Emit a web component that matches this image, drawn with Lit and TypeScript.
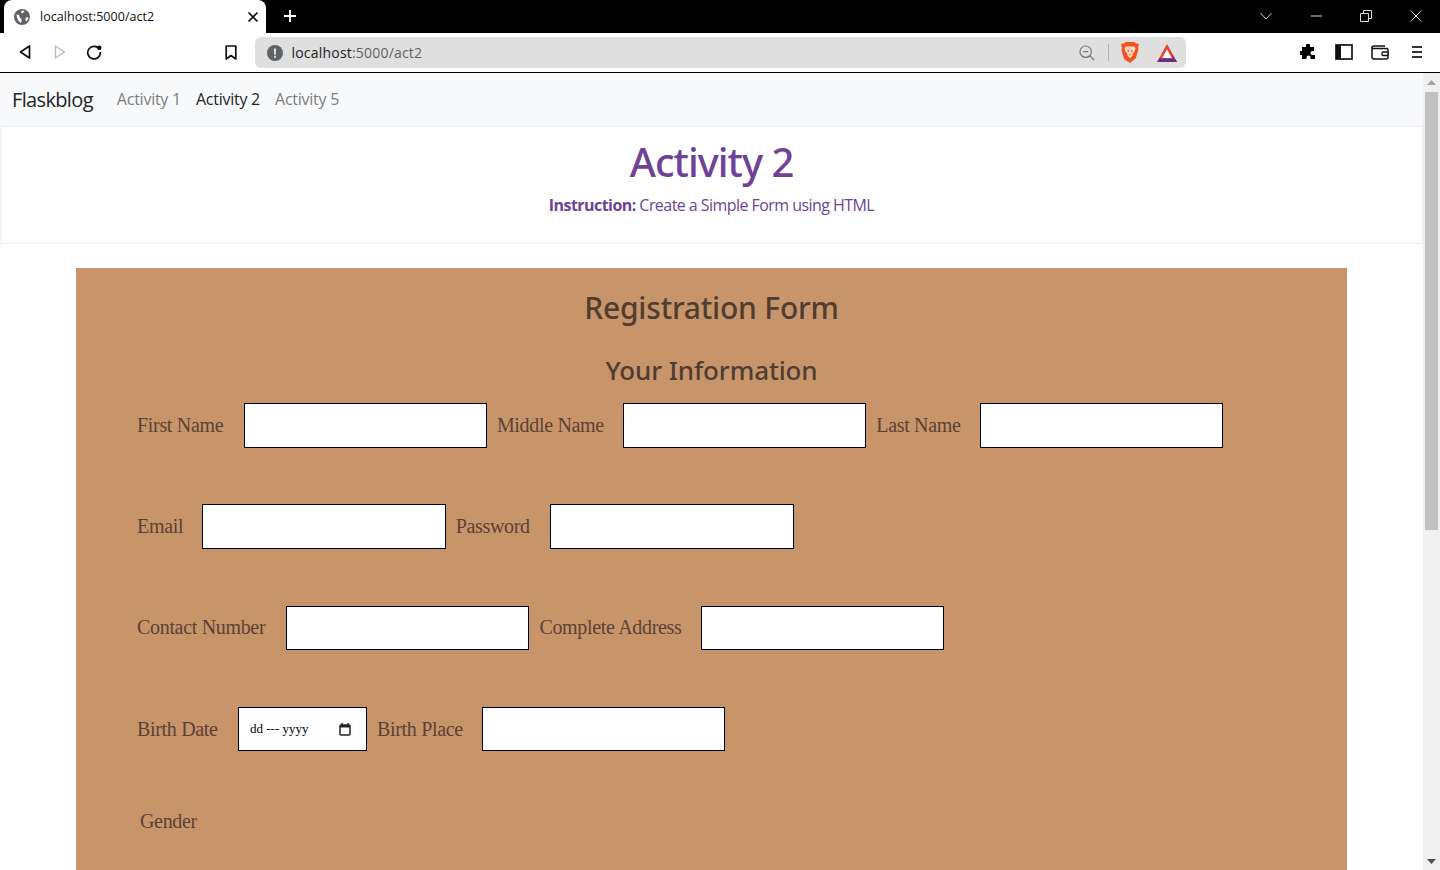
import {html, css, LitElement} from 'lit';
import {customElement} from 'lit/decorators.js';

const rows = [
  [
    {label: 'First Name', w: 106.5},
    {label: 'Middle Name', w: 126},
    {label: 'Last Name', w: 103.3},
  ],
  [
    {label: 'Email', w: 65.3},
    {label: 'Password', w: 94.5},
  ],
  [
    {label: 'Contact Number', w: 149},
    {label: 'Complete Address', w: 161.5},
  ],
];

@customElement('app-root')
export class AppRoot extends LitElement {
  static styles = css`
    :host {
      display: block;
      width: 1440px;
      height: 870px;
      overflow: hidden;
      background: #fff;
      font-family: "Open Sans", "Noto Sans", sans-serif;
    }

    /* browser chrome */
    .tabstrip {
      height: 33px;
      background: #000;
      display: flex;
      align-items: stretch;
      padding-left: 4px;
    }
    .tab {
      width: 262px;
      box-sizing: border-box;
      background: #fff;
      border-radius: 8px 8px 0 0;
      display: flex;
      align-items: center;
      padding: 0 5px 0 10px;
      font-size: 12.5px;
      letter-spacing: 0.05px;
      color: #111;
    }
    .tab-title { margin-left: 10px; flex: 1; }
    .new-tab {
      width: 48px;
      padding-bottom: 1px;
      display: flex;
      align-items: center;
      justify-content: center;
    }
    .window-btns { margin: 0 -1px 0 auto; display: flex; align-items: center; }
    .window-btns div {
      width: 50px;
      height: 31px;
      margin-bottom: 2px;
      display: flex;
      align-items: center;
      justify-content: center;
    }
    .toolbar {
      height: 39px;
      border-bottom: 1px solid #000;
      background: #fff;
      display: flex;
      align-items: center;
      padding-left: 8px;
    }
    .tool {
      width: 34.5px;
      height: 34px;
      margin-bottom: 1px;
      display: flex;
      align-items: center;
      justify-content: center;
      flex: none;
    }
    .tool.bookmark { margin-left: 102.5px; }
    .urlbar {
      width: 931px;
      height: 31px;
      margin-left: 6px;
      background: #dfdfdf;
      border-radius: 6px;
      display: flex;
      align-items: center;
      padding: 0 9px 0 12px;
      box-sizing: border-box;
      font-size: 14px;
      letter-spacing: 0.2px;
      color: #202124;
    }
    .url-text { margin-left: 9px; flex: 1; }
    .url-text span { color: #5f6368; }
    .url-sep { width: 1px; height: 17px; background: #b4b4b4; margin: 0 12px 0 13px; }
    .bat { margin-left: 18px; }
    .right-tools { margin-left: 104px; display: flex; }
    .right-tools .tool { width: 36.3px; }

    /* page + scrollbar */
    .viewport { display: flex; height: 797px; overflow: hidden; }
    .page { width: 1423px; flex: none; }
    .scrollbar {
      width: 17px;
      background: #f0f0f0;
      position: relative;
      flex: none;
    }
    .sb-thumb {
      position: absolute;
      left: 2px;
      top: 19px;
      width: 13px;
      height: 438px;
      background: #c1c1c1;
    }
    .sb-up, .sb-down { position: absolute; left: 4px; }
    .sb-up { top: 7px; }
    .sb-down { bottom: 5px; }

    .navbar {
      height: 53px;
      box-sizing: border-box;
      padding: 0 0 1px 12px;
      background: #f8f9fa;
      display: flex;
      align-items: center;
      font-size: 16px;
      letter-spacing: -0.25px;
    }
    .brand { font-size: 20px; color: #212529; margin-right: 24px; letter-spacing: -0.65px; }
    .nav-link { color: #7c7d7f; margin-right: 15px; }
    .nav-link.active { color: #212529; }

    .jumbo {
      height: 118px;
      box-sizing: border-box;
      border: 1px solid #eee;
      text-align: center;
      color: #6f4296;
      padding-top: 11px;
    }
    .jumbo h1 {
      margin: 0;
      font-family: "Noto Sans", sans-serif;
      font-size: 40px;
      line-height: 48px;
      font-weight: 500;
      letter-spacing: -1px;
    }
    .jumbo p { margin: 7px 0 0; font-size: 16px; line-height: 24px; letter-spacing: -0.55px; }
    .jumbo b { font-weight: 700; }

    .form {
      margin: 24px 76px 0;
      height: 700px;
      background: #c8956b;
      color: #5a4235;
      padding: 0 61px;
    }
    .form h2 {
      margin: 0;
      padding-top: 20px;
      font-family: "Noto Sans", sans-serif;
      font-size: 30px;
      line-height: 39px;
      font-weight: 500;
      text-align: center;
      letter-spacing: -0.2px;
      color: #4f3d31;
    }
    .form h3 {
      margin: 27px 0 0;
      font-family: "Noto Sans", sans-serif;
      font-size: 26px;
      line-height: 32px;
      font-weight: 500;
      text-align: center;
      letter-spacing: -0.13px;
      color: #4f3d31;
    }
    .rows { margin-top: 17px; }
    .row {
      display: flex;
      align-items: center;
      height: 44.55px;
      margin-bottom: 56.75px;
    }
    .label {
      font-family: "Liberation Serif", serif;
      font-size: 20px;
      letter-spacing: -0.32px;
      white-space: nowrap;
      flex: none;
    }
    input, .date {
      box-sizing: border-box;
      height: 44.55px;
      width: 243.4px;
      border: 1px solid #000;
      background: #fff;
      margin: 0 10px 0 0;
      padding: 0 10px;
      border-radius: 0;
      flex: none;
    }
    .date {
      width: 129px;
      display: flex;
      align-items: center;
      justify-content: space-between;
      font-family: "Liberation Serif", serif;
      font-size: 13px;
      padding: 0 15px 0 11px;
      color: #000;
    }
    .gender { margin-left: 3px; padding-top: 2px; }
  `;

  render() {
    return html`
      <div class="tabstrip">
        <div class="tab">
          <svg width="16" height="16" viewBox="0 0 16 16"><circle cx="8" cy="8" r="8" fill="#5f6368"/><path d="M2.500 5.500l2.500.5 1 3 1.500 1v2.500l-1 1.500-2.500-3-1-2.500zM8 1.500l2.500.5-1 1.500-1.500 1-1-1.500zM11.500 9l2.500-1 .5 1.500-2 3-1-1z" fill="#fff"/></svg>
          <span class="tab-title">localhost:5000/act2</span>
          <svg width="16" height="16" viewBox="0 0 16 16"><path d="M3.5 3.5l9 9M12.5 3.5l-9 9" stroke="#111" stroke-width="1.7"/></svg>
        </div>
        <div class="new-tab">
          <svg width="14" height="14" viewBox="0 0 14 14"><path d="M7 1v12M1 7h12" stroke="#fff" stroke-width="2"/></svg>
        </div>
        <div class="window-btns">
          <div><svg width="12" height="8" viewBox="0 0 12 8"><path d="M.5 1l5.500 6 5.500-6" fill="none" stroke="#ccc"/></svg></div>
          <div><svg width="11" height="2" viewBox="0 0 11 2"><path d="M0 1h11" stroke="#ddd"/></svg></div>
          <div><svg width="12" height="12" viewBox="0 0 12 12"><path d="M.5 3.500h8v8h-8zM3.500 3.500v-3h8v8h-3" fill="none" stroke="#ddd"/></svg></div>
          <div><svg width="12" height="12" viewBox="0 0 12 12"><path d="M.5.5l11 11M11.500.5l-11 11" stroke="#ddd"/></svg></div>
        </div>
      </div>
      <div class="toolbar">
        <div class="tool"><svg width="12" height="14" viewBox="0 0 12 14"><path d="M10.500 1v12L1.500 7z" fill="none" stroke="#111" stroke-width="1.700" stroke-linejoin="round"/></svg></div>
        <div class="tool"><svg width="12" height="14" viewBox="0 0 12 14"><path d="M1.500 1v12l9-6z" fill="none" stroke="#bbb" stroke-width="1.400" stroke-linejoin="round"/></svg></div>
        <div class="tool"><svg width="16" height="16" viewBox="0 0 16 16"><path d="M13.500 5.500A6.300 6.300 0 1 0 14.300 8" fill="none" stroke="#111" stroke-width="1.700"/><circle cx="13.300" cy="3.800" r="2.200" fill="#111"/></svg></div>
        <div class="tool bookmark"><svg width="12" height="15" viewBox="0 0 12 15"><path d="M1.200 1h9.600v13L6 10.500 1.200 14z" fill="none" stroke="#111" stroke-width="1.700" stroke-linejoin="round"/></svg></div>
        <div class="urlbar">
          <svg width="16" height="16" viewBox="0 0 16 16"><circle cx="8" cy="8" r="8" fill="#5f6368"/><path d="M7 3.500h2v6H7zM7 10.800h2v2H7z" fill="#dfdfdf"/></svg>
          <div class="url-text">localhost<span>:5000/act2</span></div>
          <svg width="16" height="16" viewBox="0 0 16 16"><circle cx="6.700" cy="6.700" r="5.700" fill="none" stroke="#777" stroke-width="1.200"/><path d="M4.200 6.700h5M10.800 10.800l4.400 4.400" stroke="#777" stroke-width="1.300"/></svg>
          <div class="url-sep"></div>
          <svg width="18" height="21" viewBox="0 0 18 21"><path d="M4.500 0h9L15 1.600l2 0 1 1.500-1 2.400.600 1.800-2.800 9L9 21 3.200 17.300l-2.800-9L1 5.500 0 3.100l1-1.500 2 0z" fill="#f1531e"/><path d="M5 4.500h8l1.500 1.500-1 3.500-1.800 2-.200 2.500L9 16l-2.500-2-.200-2.500-1.800-2-1-3.500z" fill="#ffd9c7"/><path d="M6.500 8l1.500.5v2l-1.500-1zM11.500 8l-1.500.5v2l1.500-1zM7.700 12h2.600L9 13.500z" fill="#f1531e"/></svg>
          <svg class="bat" width="20" height="18" viewBox="0 0 20 18"><path d="M10 0l10 18H0z" fill="#e8442f"/><path d="M2.500 14.500h15L20 18H0z" fill="#662d91"/><path d="M10 5.500l4.800 8.500H5.200z" fill="#fff"/><path d="M14.500 9.500L20 18l-4-2z" fill="#8b2f7a"/></svg>
        </div>
        <div class="right-tools">
          <div class="tool"><svg width="16" height="16" viewBox="0 0 16 16"><path d="M6 1.500a2 2 0 0 1 4 0V3h4v4h-1.500a2 2 0 0 0 0 4H15v4H10.500v-1.500a2 2 0 0 0-4 0V15H2v-4H.8a2 2 0 0 1 0-4H2V3h4z" fill="#000"/></svg></div>
          <div class="tool"><svg width="18" height="16" viewBox="0 0 18 16"><rect x="1" y="1" width="16" height="14" fill="#fff" stroke="#111" stroke-width="1.700"/><rect x="1" y="1" width="5" height="14" fill="#111"/></svg></div>
          <div class="tool"><svg width="18" height="15" viewBox="0 0 18 15"><path d="M1 3a2 2 0 0 1 2-2h11M1 3v9a2 2 0 0 0 2 2h12a2 2 0 0 0 2-2V5a1.500 1.500 0 0 0-1.500-1.500H3A2 2 0 0 1 1 3z" fill="none" stroke="#111" stroke-width="1.500"/><rect x="11" y="7" width="6" height="3.500" rx="1" fill="#fff" stroke="#111" stroke-width="1.300"/></svg></div>
          <div class="tool"><svg width="12" height="14" viewBox="0 0 12 14"><path d="M1 2h10M1 7h10M1 12h10" stroke="#333" stroke-width="2"/></svg></div>
        </div>
      </div>
      <div class="viewport">
        <div class="page">
          <nav class="navbar">
            <span class="brand">Flaskblog</span>
            <span class="nav-link">Activity 1</span>
            <span class="nav-link active">Activity 2</span>
            <span class="nav-link">Activity 5</span>
          </nav>
          <section class="jumbo">
            <h1>Activity 2</h1>
            <p><b>Instruction:</b> Create a Simple Form using HTML</p>
          </section>
          <form class="form">
            <h2>Registration Form</h2>
            <h3>Your Information</h3>
            <div class="rows">
              ${rows.map(
                (row) => html`
                  <div class="row">
                    ${row.map(
                      (f) => html`
                        <span class="label" style="width:${f.w}px">${f.label}</span>
                        <input type="text" />
                      `
                    )}
                  </div>
                `
              )}
              <div class="row">
                <span class="label" style="width:101px">Birth Date</span>
                <div class="date">
                  <span>dd --- yyyy</span>
                  <svg width="12" height="13" viewBox="0 0 12 13"><path d="M3 0v2M9 0v2" stroke="#222" stroke-width="1.500"/><rect x="1" y="2" width="10" height="10" rx="1" fill="#fff" stroke="#222" stroke-width="1.500"/><rect x="1" y="2" width="10" height="2.500" fill="#222"/></svg>
                </div>
                <span class="label" style="width:105px">Birth Place</span>
                <input type="text" />
              </div>
              <div class="label gender">Gender</div>
            </div>
          </form>
        </div>
        <div class="scrollbar">
          <svg class="sb-up" width="9" height="6" viewBox="0 0 9 6"><path d="M4.500 0L9 5H0z" fill="#a3a3a3"/></svg>
          <div class="sb-thumb"></div>
          <svg class="sb-down" width="9" height="6" viewBox="0 0 9 6"><path d="M4.500 5L9 0H0z" fill="#505050"/></svg>
        </div>
      </div>
    `;
  }
}
